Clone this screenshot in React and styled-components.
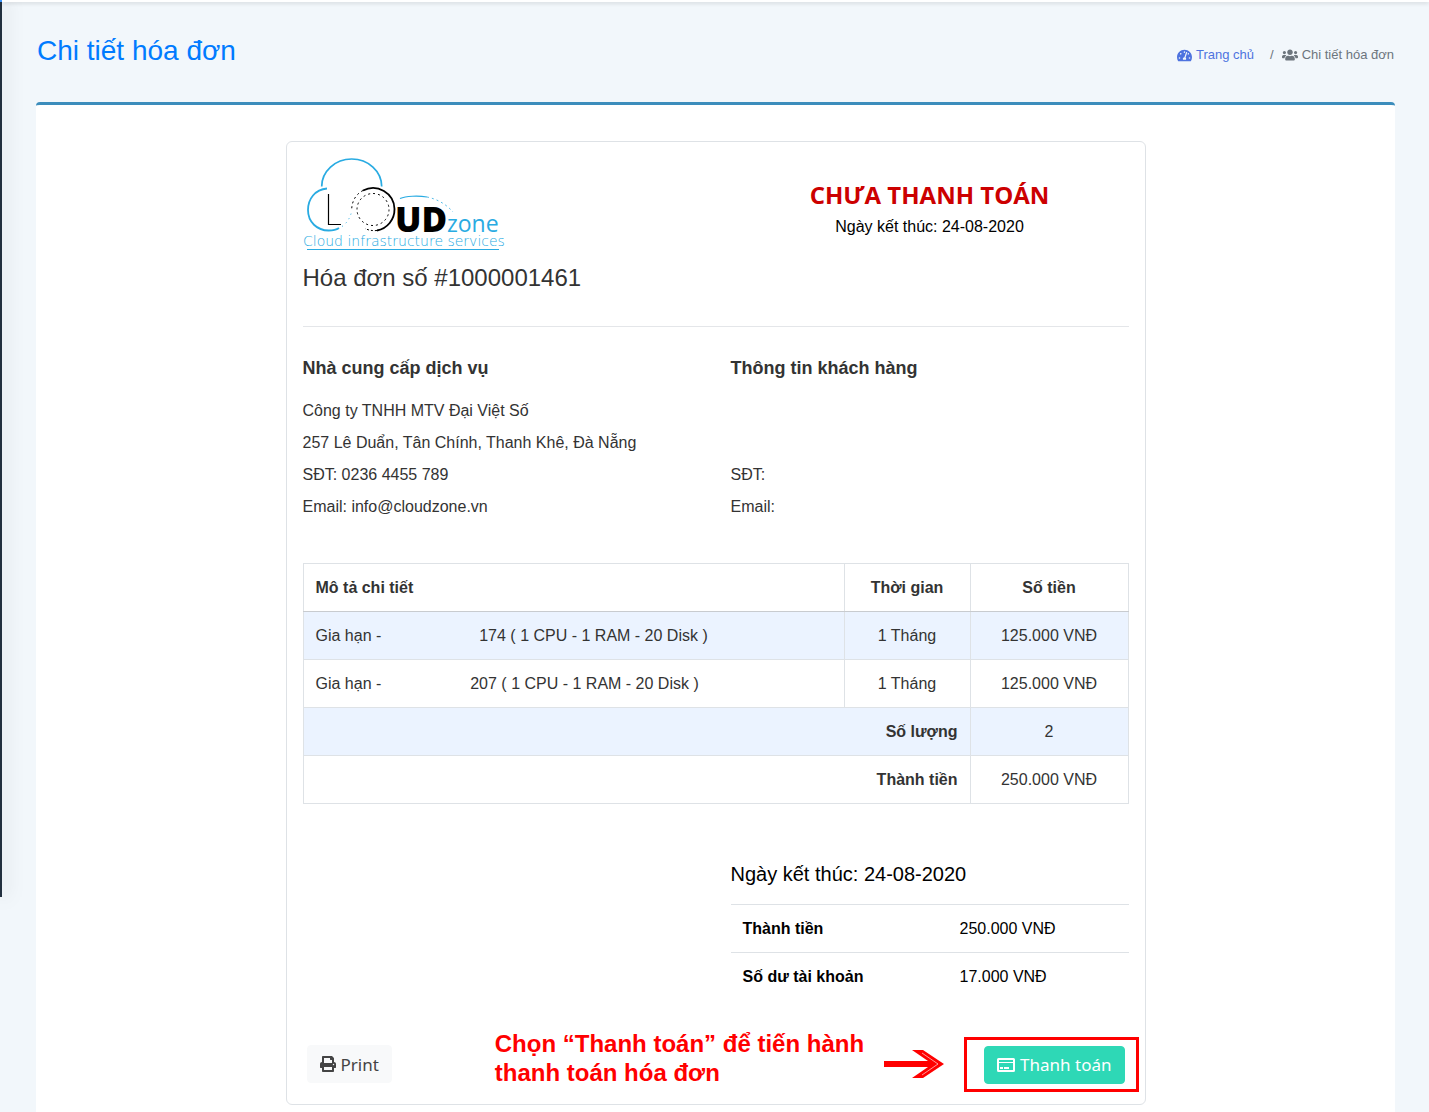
import React from 'react';
import styled, { createGlobalStyle } from 'styled-components';
import { FaTachometerAlt, FaUsers, FaPrint } from 'react-icons/fa';

const GlobalStyle = createGlobalStyle`
    * {
        box-sizing: border-box;
    }

    body {
        margin: 0;
        background-color: #f2f7fb;
        color: #333;
        font-family: "Liberation Sans", Arial, sans-serif;
        font-size: 16px;
        line-height: 24px;
    }
`;

const Layout = styled.div`
    display: flex;
    align-items: flex-start;
    min-height: 100vh;
`;

const Sidebar = styled.aside`
    flex: none;
    width: 2px;
    height: 897px;
    background-color: #22303f;
    border-top: 2px solid #4099ff;
    box-shadow: 2px 0 18px rgba(43, 43, 43, 0.35);
`;

const Main = styled.main`
    flex: 1;
    display: flex;
    flex-direction: column;
    min-height: 100vh;
`;

const TopBar = styled.div`
    height: 2px;
    background-color: #fff;
    box-shadow: 0 1px 4px rgba(0, 0, 0, 0.2);
`;

const PageHeader = styled.header`
    display: flex;
    justify-content: space-between;
    align-items: center;
    height: 100px;
    padding: 0 35px;
`;

const PageTitle = styled.h1`
    margin: 0 0 2px;
    color: #007bff;
    font-size: 28px;
    font-weight: 400;
    line-height: 34px;
`;

const Breadcrumb = styled.nav`
    display: flex;
    align-items: center;
    padding-top: 6px;
    color: #6c757d;
    font-size: 13px;
    line-height: 20px;
`;

const Crumb = styled.span`
    display: inline-flex;
    align-items: center;
    gap: 4px;
`;

const CrumbLink = styled.a`
    display: inline-flex;
    align-items: center;
    gap: 4px;
    color: #4e73df;
    text-decoration: none;
`;

const Slash = styled.span`
    padding: 0 8px 0 16px;
`;

const Panel = styled.section`
    flex: 1;
    margin: 0 34px;
    padding: 36px 16px 7px;
    background-color: #fff;
    border-top: 3px solid #3c8dbc;
    border-radius: 4px 4px 0 0;
`;

const Invoice = styled.article`
    max-width: 860px;
    margin: 0 auto;
    padding: 15px 16px 4px;
    border: 1px solid #dee2e6;
    border-radius: 6px;
`;

const Columns = styled.div`
    display: grid;
    grid-template-columns: 1fr 1fr;
    gap: 30px;
`;

const Logo = styled.svg`
    display: block;
    width: 204px;
    height: 96px;
`;

const InvoiceNumber = styled.h2`
    margin: 10px 0 0;
    font-size: 24px;
    font-weight: 400;
    line-height: 30px;
`;

const Status = styled.div`
    padding-top: 20px;
    color: #000;
    text-align: center;
`;

const StatusText = styled.div`
    margin-bottom: 3px;
    color: #c00;
    font-family: "Open Sans", "Noto Sans", sans-serif;
    font-size: 24px;
    font-weight: 700;
    line-height: 35px;
`;

const Divider = styled.hr`
    margin: 33px 0 26px;
    border: 0;
    border-top: 1px solid #e4e6e9;
`;

const PartyTitle = styled.h3`
    margin: 0 0 12px;
    font-size: 18px;
    font-weight: 700;
    line-height: 30px;
`;

const PartyLine = styled.div`
    height: 32px;
    line-height: 32px;
`;

const Items = styled.table`
    width: 100%;
    margin-top: 40px;
    border-collapse: collapse;
    table-layout: fixed;
`;

const Row = styled.tr`
    height: 48px;
    background-color: ${(props) => (props.$striped ? '#ebf3ff' : '#fff')};
`;

const Cell = styled.td`
    padding: 0 12px;
    border: 1px solid #dee2e6;
    text-align: ${(props) => props.$align || 'left'};
`;

const HeadCell = styled.th`
    width: ${(props) => props.$width || 'auto'};
    padding: 0 12px;
    border: 1px solid #dee2e6;
    border-bottom-color: #c8cbcf;
    text-align: ${(props) => props.$align || 'left'};
`;

const SumCell = styled.th`
    padding: 0 12px;
    border: 1px solid #dee2e6;
    text-align: right;
`;

const Blank = styled.span`
    display: inline-block;
    width: ${(props) => props.$width}px;
`;

const Totals = styled.div`
    grid-column: 2;
    padding-top: 55px;
    color: #000;
`;

const DueDate = styled.div`
    margin-bottom: 15px;
    font-size: 20px;
    line-height: 30px;
`;

const TotalsTable = styled.table`
    width: 100%;
    border-collapse: collapse;
    table-layout: fixed;
`;

const TotalsLabel = styled.th`
    width: 217px;
    height: 48px;
    padding: 0 12px;
    border-top: 1px solid #dee2e6;
    text-align: left;
`;

const TotalsValue = styled.td`
    padding: 0 12px;
    border-top: 1px solid #dee2e6;
`;

const Actions = styled.footer`
    display: flex;
    align-items: center;
    margin: 28px -10px 0 4px;
`;

const Button = styled.button`
    display: inline-flex;
    align-items: center;
    gap: 5px;
    height: 38px;
    padding: 0 12px;
    border: 1px solid ${(props) => (props.$primary ? '#2ed8b6' : '#f8f9fa')};
    border-radius: 4px;
    background-color: ${(props) => (props.$primary ? '#2ed8b6' : '#f8f9fa')};
    color: ${(props) => (props.$primary ? '#fff' : '#444')};
    font-family: "Noto Sans", sans-serif;
    font-size: 17px;
    cursor: pointer;
`;

const CardIcon = styled.svg`
    width: 18px;
    height: 14px;
`;

const Hint = styled.p`
    margin: 0 20px 13px auto;
    color: #f00;
    font-size: 24px;
    font-weight: 700;
    line-height: 29px;
`;

const Arrow = styled.svg`
    flex: none;
    width: 60px;
    height: 28px;
    margin-right: 20px;
`;

const Highlight = styled.div`
    flex: none;
    padding: 6px 11px 5px 17px;
    border: 3px solid #f00;
    line-height: 0;
`;

const items = [
    { code: '174', blank: 89, time: '1 Tháng', price: '125.000 VNĐ' },
    { code: '207', blank: 80, time: '1 Tháng', price: '125.000 VNĐ' },
];

const CloudLogo = () => (
    <Logo viewBox="0 0 204 96" role="img" aria-label="Cloudzone" fill="none">
        <g stroke="#29abe2">
            <path d="M18.700 29.500A30 27.500 0 0 1 78.700 29.500" strokeWidth="1.7" />
            <path d="M24 31.500C12 32.500 5 42 5 53C5 65 14 73.500 25.700 73.500C29.500 73.500 33 73 36 71" strokeWidth="1.8" />
            <path d="M39 69.500C44 66 47 61 48.500 55" strokeWidth="1" strokeDasharray="1 4" />
            <path d="M97 41.500C103 39 115 38.500 124 40" strokeWidth="1.2" />
            <path d="M124 40C134 42 143 47 150 55" strokeWidth="0.8" strokeDasharray="2 3" />
            <path d="M4 92.500H196" strokeWidth="1" />
        </g>
        <g stroke="#000">
            <path d="M25.500 37V67.500H38" strokeWidth="1.2" />
            <path d="M60 33.500A21.500 21.500 0 0 1 91.500 52A21.500 21.500 0 0 1 74 73.500" strokeWidth="1.8" />
            <path d="M60 33.500C53 37 49 44 48.700 52" strokeWidth="1" strokeDasharray="2 3" />
            <path d="M74 73.500C69 74 65 73 62 71.500" strokeWidth="1" strokeDasharray="2 2" />
            <circle cx="70" cy="52.500" r="16" strokeWidth="1" strokeDasharray="2 3" />
        </g>
        <text x="92" y="75" fill="#000" fontFamily="Open Sans, sans-serif" fontSize="35" fontWeight="800">UD</text>
        <text x="144" y="75" fill="#29abe2" fontFamily="Open Sans, sans-serif" fontSize="23">zone</text>
        <text x="0" y="89" fill="#29abe2" fontFamily="DejaVu Sans, sans-serif" fontSize="14" fontWeight="200">Cloud infrastructure services</text>
    </Logo>
);

const App = () => {
    return (
        <>
            <GlobalStyle />
            <Layout>
                <Sidebar />
                <Main>
                    <TopBar />
                    <PageHeader>
                        <PageTitle>Chi tiết hóa đơn</PageTitle>
                        <Breadcrumb>
                            <CrumbLink href="#home"><FaTachometerAlt size={15} />Trang chủ</CrumbLink>
                            <Slash>/</Slash>
                            <Crumb><FaUsers size={16} />Chi tiết hóa đơn</Crumb>
                        </Breadcrumb>
                    </PageHeader>
                    <Panel>
                        <Invoice>
                            <Columns>
                                <div>
                                    <CloudLogo />
                                    <InvoiceNumber>Hóa đơn số #1000001461</InvoiceNumber>
                                </div>
                                <Status>
                                    <StatusText>CHƯA THANH TOÁN</StatusText>
                                    <div>Ngày kết thúc: 24-08-2020</div>
                                </Status>
                            </Columns>
                            <Divider />
                            <Columns>
                                <div>
                                    <PartyTitle>Nhà cung cấp dịch vụ</PartyTitle>
                                    <PartyLine>Công ty TNHH MTV Đại Việt Số</PartyLine>
                                    <PartyLine>257 Lê Duẩn, Tân Chính, Thanh Khê, Đà Nẵng</PartyLine>
                                    <PartyLine>SĐT: 0236 4455 789</PartyLine>
                                    <PartyLine>Email: info@cloudzone.vn</PartyLine>
                                </div>
                                <div>
                                    <PartyTitle>Thông tin khách hàng</PartyTitle>
                                    <PartyLine />
                                    <PartyLine />
                                    <PartyLine>SĐT:</PartyLine>
                                    <PartyLine>Email:</PartyLine>
                                </div>
                            </Columns>
                            <Items>
                                <thead>
                                    <Row>
                                        <HeadCell>Mô tả chi tiết</HeadCell>
                                        <HeadCell $width="126px" $align="center">Thời gian</HeadCell>
                                        <HeadCell $width="158px" $align="center">Số tiền</HeadCell>
                                    </Row>
                                </thead>
                                <tbody>
                                    {items.map((item, i) => (
                                        <Row key={item.code} $striped={i % 2 === 0}>
                                            <Cell>Gia hạn - <Blank $width={item.blank} /> {item.code} ( 1 CPU - 1 RAM - 20 Disk )</Cell>
                                            <Cell $align="center">{item.time}</Cell>
                                            <Cell $align="center">{item.price}</Cell>
                                        </Row>
                                    ))}
                                    <Row $striped>
                                        <SumCell colSpan={2}>Số lượng</SumCell>
                                        <Cell $align="center">2</Cell>
                                    </Row>
                                    <Row>
                                        <SumCell colSpan={2}>Thành tiền</SumCell>
                                        <Cell $align="center">250.000 VNĐ</Cell>
                                    </Row>
                                </tbody>
                            </Items>
                            <Columns>
                                <Totals>
                                    <DueDate>Ngày kết thúc: 24-08-2020</DueDate>
                                    <TotalsTable>
                                        <tbody>
                                            <tr>
                                                <TotalsLabel>Thành tiền</TotalsLabel>
                                                <TotalsValue>250.000 VNĐ</TotalsValue>
                                            </tr>
                                            <tr>
                                                <TotalsLabel>Số dư tài khoản</TotalsLabel>
                                                <TotalsValue>17.000 VNĐ</TotalsValue>
                                            </tr>
                                        </tbody>
                                    </TotalsTable>
                                </Totals>
                            </Columns>
                            <Actions>
                                <Button type="button"><FaPrint size={16} />Print</Button>
                                <Hint>Chọn “Thanh toán” để tiến hành<br />thanh toán hóa đơn</Hint>
                                <Arrow viewBox="0 0 60 28" aria-hidden="true">
                                    <path d="M0 11H44L28 0H39L60 14L39 28H28L44 17H0Z" fill="#f00" />
                                    <path d="M38 3L54 14L38 25" fill="none" stroke="#fff" strokeWidth="0.6" />
                                </Arrow>
                                <Highlight>
                                    <Button type="button" $primary>
                                        <CardIcon viewBox="0 0 18 14" aria-hidden="true" fill="none" stroke="#fff">
                                            <rect x="1" y="1" width="16" height="12" rx="0.5" strokeWidth="2" />
                                            <path d="M1 4.500H17" strokeWidth="1" />
                                            <path d="M3 10H6M7 10H12" strokeWidth="2" />
                                        </CardIcon>
                                        Thanh toán
                                    </Button>
                                </Highlight>
                            </Actions>
                        </Invoice>
                    </Panel>
                </Main>
            </Layout>
        </>
    );
};

export default App;
